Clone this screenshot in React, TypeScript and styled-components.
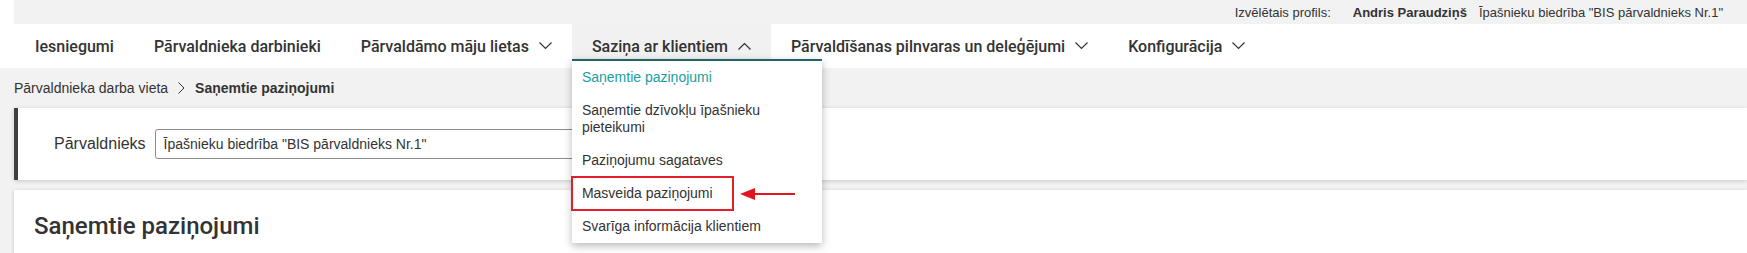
import styled, { createGlobalStyle } from "styled-components";

const GlobalStyle = createGlobalStyle`
  body {
    margin: 0;
    background: #f2f2f2;
    font-family: "Liberation Sans", Arial, sans-serif;
    color: #333;
  }
`;

// Header: profile strip + main navigation
const Header = styled.header`
  background: #fff;
  position: relative;
  z-index: 5;
`;

const TopBar = styled.div`
  margin-left: 14px;
  height: 24px;
  background: #f2f2f2;
  display: flex;
  align-items: center;
  justify-content: flex-end;
  padding-right: 24px;
  font-size: 13px;
  color: #333;
`;

const ProfileLabel = styled.span`
  margin-right: 22px;
`;

const ProfileName = styled.span`
  font-weight: 700;
  margin-right: 12px;
`;

const Nav = styled.nav`
  height: 44px;
  display: flex;
  align-items: stretch;
  padding-left: 15px;
`;

const NavItem = styled.div<{ $active?: boolean }>`
  position: relative;
  display: flex;
  align-items: center;
  gap: 10px;
  padding: 0 20px;
  font-family: Roboto, "Liberation Sans", sans-serif;
  font-weight: 500;
  font-size: 16px;
  color: #333;
  background: ${({ $active }) => ($active ? "#f1f1f1" : "transparent")};
`;

const Dropdown = styled.div`
  position: absolute;
  top: 35px;
  left: 0;
  width: 250px;
  background: #fff;
  border-top: 2px solid #1f6565;
  box-shadow: 0 3px 8px rgba(0, 0, 0, 0.28);
  font-family: "Liberation Sans", Arial, sans-serif;
  font-weight: 400;
  font-size: 14px;
`;

const MenuItem = styled.div<{ $current?: boolean; $marked?: boolean }>`
  position: relative;
  padding: 8px 10px;
  line-height: 17px;
  color: ${({ $current }) => ($current ? "#17a0a0" : "#333")};
  ${({ $marked }) =>
    $marked &&
    `
    width: fit-content;
    padding-right: 20px;
    outline: 2px solid #e3202a;
    outline-offset: -1px;
  `}
`;

const Pointer = styled.svg`
  position: absolute;
  left: calc(100% + 7px);
  top: 50%;
  transform: translateY(-50%);
`;

const Breadcrumb = styled.div`
  height: 40px;
  display: flex;
  align-items: center;
  gap: 10px;
  padding-left: 14px;
  font-size: 14px;
  color: #333;
`;

const Current = styled.b`
  font-weight: 700;
`;

const Main = styled.main`
  padding-left: 14px;
  display: flex;
  flex-direction: column;
  gap: 10px;
`;

const FilterCard = styled.section`
  height: 72px;
  background: #fff;
  border-left: 4px solid #404040;
  box-shadow: 0 1px 4px rgba(0, 0, 0, 0.18);
  display: flex;
  align-items: center;
  padding-left: 36px;
`;

const Label = styled.label`
  font-size: 16px;
  margin-right: 9px;
  color: #333;
`;

const Select = styled.div`
  width: 500px;
  height: 30px;
  box-sizing: border-box;
  border: 1px solid #8c8c8c;
  border-radius: 3px;
  display: flex;
  align-items: center;
  padding: 0 8px;
  font-size: 14px;
  color: #333;
`;

const ContentCard = styled.section`
  background: #fff;
  box-shadow: 0 1px 4px rgba(0, 0, 0, 0.18);
  padding: 22px 20px 30px;
`;

const Title = styled.h1`
  margin: 0;
  font-family: Roboto, "Liberation Sans", sans-serif;
  font-weight: 500;
  font-size: 24px;
  line-height: 28px;
  color: #333;
`;

const Chevron = ({ up }: { up?: boolean }) => (
  <svg width="13" height="8" viewBox="0 0 13 8">
    <polyline
      points={up ? "0.5,7.5 6.5,1.5 12.5,7.5" : "0.5,0.5 6.5,6.5 12.5,0.5"}
      fill="none"
      stroke="#333"
      strokeWidth="1.2"
    />
  </svg>
);

const menu = [
  "Saņemtie paziņojumi",
  "Saņemtie dzīvokļu īpašnieku pieteikumi",
  "Paziņojumu sagataves",
  "Masveida paziņojumi",
  "Svarīga informācija klientiem",
];

const App = () => {
  return (
    <>
      <GlobalStyle />
      <Header>
        <TopBar>
          <ProfileLabel>Izvēlētais profils:</ProfileLabel>
          <ProfileName>Andris Paraudziņš</ProfileName>
          <span>Īpašnieku biedrība "BIS pārvaldnieks Nr.1"</span>
        </TopBar>
        <Nav>
          <NavItem>Iesniegumi</NavItem>
          <NavItem>Pārvaldnieka darbinieki</NavItem>
          <NavItem>
            Pārvaldāmo māju lietas <Chevron />
          </NavItem>
          <NavItem $active>
            Saziņa ar klientiem <Chevron up />
            <Dropdown>
              {menu.map((item, i) => (
                <MenuItem key={i} $current={i === 0} $marked={i === 3}>
                  {item}
                  {i === 3 && (
                    <Pointer width="56" height="14" viewBox="0 0 56 14">
                      <polygon points="0,7 15,1 15,13" fill="#e3141d" />
                      <rect x="14" y="6" width="41" height="2" fill="#e3141d" />
                    </Pointer>
                  )}
                </MenuItem>
              ))}
            </Dropdown>
          </NavItem>
          <NavItem>
            Pārvaldīšanas pilnvaras un deleģējumi <Chevron />
          </NavItem>
          <NavItem>
            Konfigurācija <Chevron />
          </NavItem>
        </Nav>
      </Header>
      <Breadcrumb>
        <span>Pārvaldnieka darba vieta</span>
        <svg width="7" height="12" viewBox="0 0 7 12">
          <polyline points="0.5,0.5 6,6 0.5,11.5" fill="none" stroke="#333" strokeWidth="1" />
        </svg>
        <Current>Saņemtie paziņojumi</Current>
      </Breadcrumb>
      <Main>
        <FilterCard>
          <Label>Pārvaldnieks</Label>
          <Select>Īpašnieku biedrība "BIS pārvaldnieks Nr.1"</Select>
        </FilterCard>
        <ContentCard>
          <Title>Saņemtie paziņojumi</Title>
        </ContentCard>
      </Main>
    </>
  );
};

export default App;
